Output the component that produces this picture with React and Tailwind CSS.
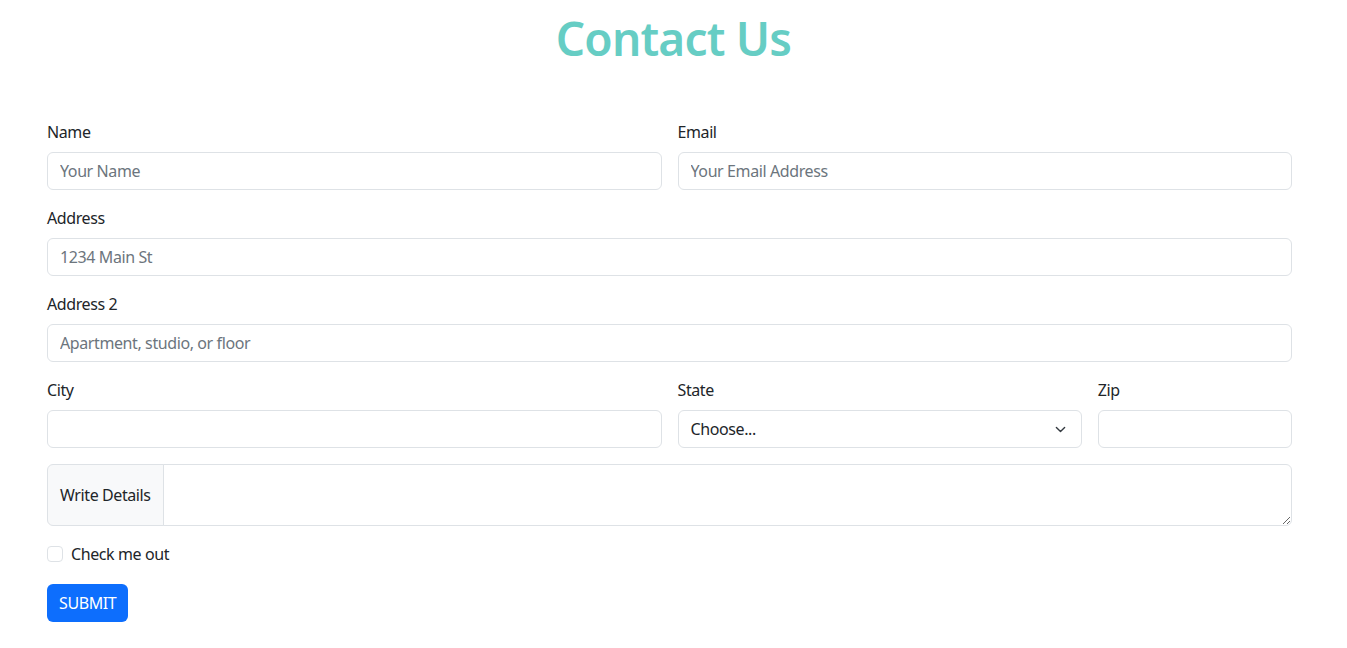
export default function App() {
  const font = { fontFamily: '"Noto Sans", "Open Sans", sans-serif' };
  const input =
    "block w-full h-[38px] px-3 text-[16px] tracking-[-0.4px] text-[#212529] bg-white border border-[#dee2e6] rounded-[6px] placeholder:text-[#6c757d] outline-none";
  const label = "block mb-2 text-[16px] leading-6 tracking-[-0.4px] text-[#212529]";
  return (
    <div className="min-h-[648px] bg-white" style={font}>
      <h1 className="pt-[9px] text-center text-[46px] leading-[58px] font-semibold tracking-[-0.8px] text-[#66cdc4]">
        Contact Us
      </h1>
      <form className="pl-[47px] pr-[55px] pt-[53px] flex flex-col gap-4">
        <div className="grid grid-cols-12 gap-4">
          <div className="col-span-6">
            <label className={label}>Name</label>
            <input className={input} placeholder="Your Name" />
          </div>
          <div className="col-span-6">
            <label className={label}>Email</label>
            <input className={input} placeholder="Your Email Address" />
          </div>
        </div>
        <div>
          <label className={label}>Address</label>
          <input className={input} placeholder="1234 Main St" />
        </div>
        <div>
          <label className={label}>Address 2</label>
          <input className={input} placeholder="Apartment, studio, or floor" />
        </div>
        <div className="grid grid-cols-12 gap-4">
          <div className="col-span-6">
            <label className={label}>City</label>
            <input className={input} />
          </div>
          <div className="col-span-4">
            <label className={label}>State</label>
            <div className="relative h-[38px] border border-[#dee2e6] rounded-[6px] flex items-center px-3 text-[16px] tracking-[-0.4px] text-[#212529]">
              Choose...
              <svg
                className="absolute right-[14px] top-[13px]"
                width="13"
                height="11"
                viewBox="0 0 16 16"
                fill="none"
                stroke="#343a40"
                strokeWidth="2"
                strokeLinecap="round"
                strokeLinejoin="round"
              >
                <path d="M2 5l6 6 6-6" />
              </svg>
            </div>
          </div>
          <div className="col-span-2">
            <label className={label}>Zip</label>
            <input className={input} />
          </div>
        </div>
        <div className="flex h-[62px]">
          <span className="flex items-center px-3 text-[16px] tracking-[-0.4px] text-[#212529] bg-[#f8f9fa] border border-[#dee2e6] rounded-l-[6px]">
            Write Details
          </span>
          <textarea className="flex-1 -ml-px border border-[#dee2e6] rounded-r-[6px] resize-y outline-none px-3" />
        </div>
        <div className="flex items-center h-6 mb-[2px]">
          <span className="w-4 h-4 border border-[#dee2e6] rounded-[4px] bg-white" />
          <span className="ml-2 text-[16px] tracking-[-0.4px] text-[#212529] leading-6">Check me out</span>
        </div>
        <div>
          <button
            type="button"
            className="h-[38px] px-3 bg-[#0d6efd] text-white text-[16px] tracking-[-0.4px] rounded-[6px]"
          >
            SUBMIT
          </button>
        </div>
      </form>
    </div>
  );
}
